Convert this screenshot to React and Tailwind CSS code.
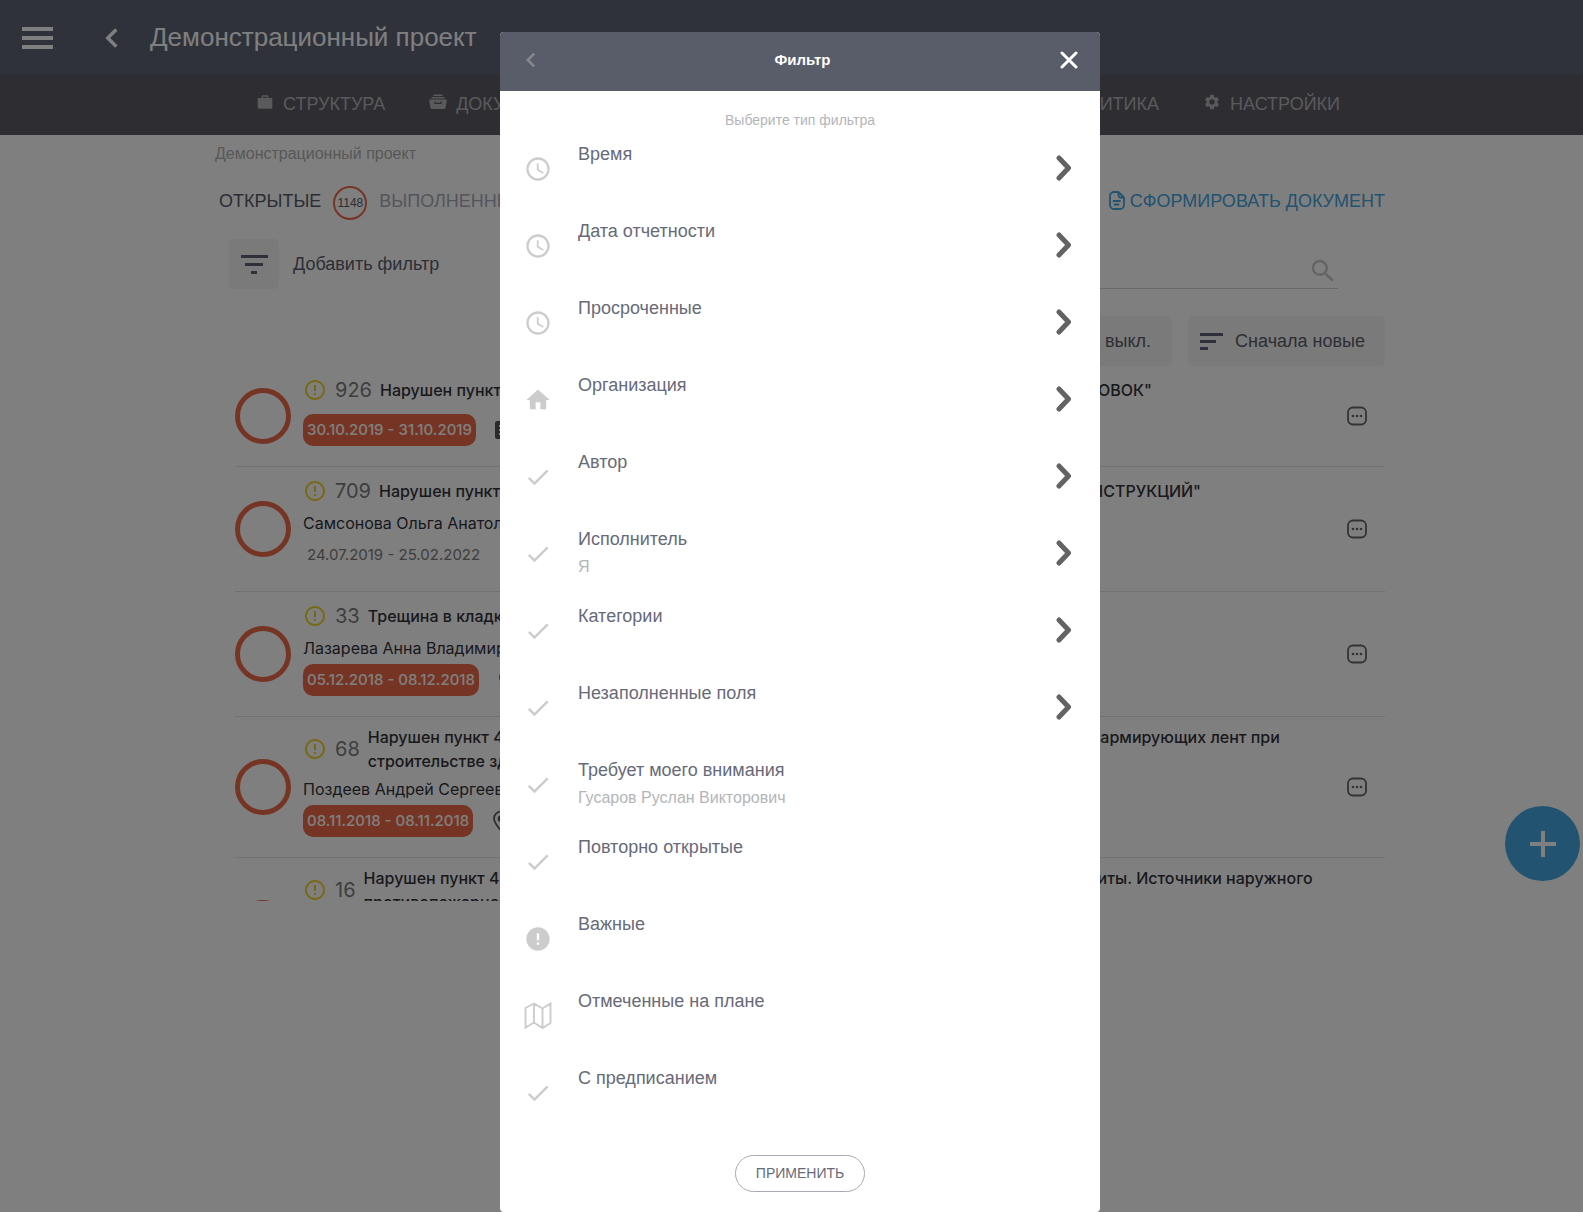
import React from "react";
import { MdAccessTime, MdCheck, MdError, MdErrorOutline, MdHome, MdSearch, MdSettings } from "react-icons/md";
import { IoMdBriefcase, IoMdStats } from "react-icons/io";

function Chevron({ className, direction = "left", round = false, weight = 4 }) {
  return (
    <svg
      viewBox="0 0 16 28"
      className={className}
      fill="none"
      stroke="currentColor"
      strokeWidth={weight}
      strokeLinecap={round ? "round" : "butt"}
      strokeLinejoin={round ? "round" : "miter"}
      aria-hidden="true"
    >
      <path d={direction === "left" ? "M13 4 L3 14 L13 24" : "M3 4 L12.5 14 L3 24"} />
    </svg>
  );
}

function DrawerIcon({ className }) {
  return (
    <svg viewBox="0 0 18 18" className={className} fill="currentColor" aria-hidden="true">
      <path d="M5 1.500 H13 L14 3 H4 Z" />
      <path d="M3 4 H15 L16 5.500 H2 Z" />
      <path fillRule="evenodd" d="M0 6.500 H18 L16.500 15 A1.500 1.500 0 0 1 15 16 H3 A1.500 1.500 0 0 1 1.500 15 Z M5.500 8.500 V11 H12.500 V8.500 H11.200 V9.700 H6.800 V8.500 Z" />
    </svg>
  );
}

function MapIcon({ className }) {
  return (
    <svg viewBox="0 0 28 28" className={className} fill="none" stroke="currentColor" strokeWidth="1.9" aria-hidden="true">
      <path d="M1.5 6 L10 1.5 L18.5 6.5 L26.5 1.5 V21 L18.5 26 L10 20.5 L1.5 25.5 Z M10 1.5 V20.5 M18.5 6.5 V26" />
    </svg>
  );
}

function DocumentIcon({ className }) {
  return (
    <svg viewBox="0 0 16 20" className={className} fill="none" stroke="currentColor" strokeWidth="1.8" strokeLinecap="round" strokeLinejoin="round" aria-hidden="true">
      <path d="M9.5 1 H5 A4 4 0 0 0 1 5 V14 A4 4 0 0 0 5 18 H11 A4 4 0 0 0 15 14 V6.5 Z M9.5 1 V4.5 A2 2 0 0 0 11.500 6.5 H15 M4.500 10 H11 M5.500 13.500 H9.500" />
    </svg>
  );
}

function MoreIcon() {
  return (
    <svg viewBox="0 0 24 24" className="size-6" fill="none" stroke="currentColor" strokeWidth="1.8" aria-hidden="true">
      <rect x="3" y="3.500" width="18" height="17" rx="5" />
      <g fill="currentColor" stroke="none">
        <circle cx="8" cy="12" r="1.300" />
        <circle cx="12" cy="12" r="1.300" />
        <circle cx="16" cy="12" r="1.300" />
      </g>
    </svg>
  );
}

function NoteIcon() {
  return (
    <svg viewBox="0 0 24 24" className="size-6" aria-hidden="true">
      <rect x="3" y="3" width="18" height="18" rx="2" fill="currentColor" />
      <path d="M7 8 H17 M7 12 H17 M7 16 H14" stroke="white" strokeWidth="2" />
    </svg>
  );
}

function PinIcon() {
  return (
    <svg viewBox="0 0 24 24" className="size-6" fill="none" stroke="currentColor" strokeWidth="1.7" aria-hidden="true">
      <path d="M12 21.500 C8 17 5 13.500 5 9.500 A7 7 0 0 1 19 9.500 C19 13.500 16 17 12 21.500 Z" />
      <circle cx="12" cy="9.500" r="2.500" fill="currentColor" />
    </svg>
  );
}

const leftNav = [
  { label: "СТРУКТУРА", Icon: IoMdBriefcase },
  { label: "ДОКУМЕНТЫ", Icon: DrawerIcon },
];
const rightNav = [
  { label: "АНАЛИТИКА", Icon: IoMdStats },
  { label: "НАСТРОЙКИ", Icon: MdSettings },
];

const issues = [
  { id: 926, head: "Нарушен пункт", tail: 'УСТАНОВОК"', width: "w-[772px]", date: "30.10.2019 - 31.10.2019", late: true, Mark: NoteIcon },
  { id: 709, head: "Нарушен пункт", tail: 'КОНСТРУКЦИЙ"', width: "w-[822px]", person: "Самсонова Ольга Анатольевна", date: "24.07.2019 - 25.02.2022" },
  { id: 33, head: "Трещина в кладке", tail: "", width: "w-[772px]", person: "Лазарева Анна Владимировна", date: "05.12.2018 - 08.12.2018", late: true, Mark: PinIcon },
  { id: 68, head: "Нарушен пункт 4.", tail: "и армирующих лент при", second: "строительстве зданий", width: "w-[912px]", person: "Поздеев Андрей Сергеевич", date: "08.11.2018 - 08.11.2018", late: true, Mark: PinIcon },
  { id: 16, head: "Нарушен пункт 4.", tail: "защиты. Источники наружного", second: "противопожарного", width: "w-[949px]", person: "Поздеев Андрей Сергеевич", date: "08.11.2018 - 08.11.2018", late: true, Mark: PinIcon },
];

const filters = [
  { label: "Время", Icon: MdAccessTime, more: true },
  { label: "Дата отчетности", Icon: MdAccessTime, more: true },
  { label: "Просроченные", Icon: MdAccessTime, more: true },
  { label: "Организация", Icon: MdHome, more: true },
  { label: "Автор", Icon: MdCheck, more: true },
  { label: "Исполнитель", value: "Я", Icon: MdCheck, more: true },
  { label: "Категории", Icon: MdCheck, more: true },
  { label: "Незаполненные поля", Icon: MdCheck, more: true },
  { label: "Требует моего внимания", value: "Гусаров Руслан Викторович", Icon: MdCheck },
  { label: "Повторно открытые", Icon: MdCheck },
  { label: "Важные", Icon: MdError },
  { label: "Отмеченные на плане", Icon: MapIcon },
  { label: "С предписанием", Icon: MdCheck },
];

function NavGroup({ items }) {
  return (
    <div className="flex gap-11">
      {items.map(({ label, Icon }) => (
        <a key={label} href="#" className="flex items-center gap-[9px] text-lg text-[#b4b4b8]">
          <Icon className="mb-1 size-[18px]" />
          {label}
        </a>
      ))}
    </div>
  );
}

function IssueRow({ issue }) {
  const { id, head, tail, second, width, person, date, late, Mark } = issue;
  return (
    <li className="flex items-center border-b border-[#e4e4e4]">
      <span className="size-14 shrink-0 rounded-full border-[5px] border-[#ec6b48]" />
      <div className="ml-3 min-w-0 grow pt-2 pb-5 font-['Inter','Noto_Sans',sans-serif] text-base">
        <div className="flex min-h-8 items-center">
          <MdErrorOutline className="size-6 shrink-0 text-[#efd32c]" />
          <span className="ml-2 text-xl text-[#7c7c7c]">{id}</span>
          <div className={`ml-2 shrink-0 leading-6 font-medium whitespace-nowrap text-[#33333a] ${width}`}>
            <div className="flex justify-between">
              <span>{head}</span>
              <span>{tail}</span>
            </div>
            {second && <div>{second}</div>}
          </div>
        </div>
        {person && <p className="leading-8 text-[#33333a]">{person}</p>}
        <div className={person ? "flex items-center gap-4" : "mt-2 flex items-center gap-4"}>
          <span
            className={
              late
                ? "rounded-[10px] bg-[#ec6b48] px-1 text-[15px] leading-8 font-medium text-white"
                : "px-1 text-[15px] leading-8 text-[#7c7c7c]"
            }
          >
            {date}
          </span>
          {Mark && (
            <span className="text-[#55555a]">
              <Mark />
            </span>
          )}
        </div>
      </div>
      <button type="button" aria-label="Действия" className="mr-4 text-[#66666a]">
        <MoreIcon />
      </button>
    </li>
  );
}

function Page() {
  return (
    <div>
      <header className="flex h-[75px] items-center bg-[#5e6474] text-white">
        <button type="button" aria-label="Меню" className="ml-[22px] flex w-[31px] flex-col gap-[5px]">
          <span className="h-[4px] w-full bg-white" />
          <span className="h-[4px] w-full bg-white" />
          <span className="h-[4px] w-full bg-white" />
        </button>
        <button type="button" aria-label="Назад" className="ml-[51px]">
          <Chevron className="h-6 w-4" weight={4} />
        </button>
        <h1 className="ml-[30px] text-[26px]">Демонстрационный проект</h1>
      </header>
      <nav className="h-[60px] bg-[#5b5b64] pr-1 pb-0.5 pl-[17px]">
        <div className="mx-auto flex h-full max-w-[1084px] items-center justify-between">
          <NavGroup items={leftNav} />
          <NavGroup items={rightNav} />
        </div>
      </nav>

      <main className="pl-[17px]">
        <div className="mx-auto max-w-[1170px]">
          <p className="pt-[7px] text-base text-[#b0b0b0]">Демонстрационный проект</p>
          <div className="mt-2.5 flex h-[50px] items-center justify-between pl-1 text-lg">
            <div className="flex items-center gap-3">
              <button type="button" className="text-[#585b69]">ОТКРЫТЫЕ</button>
              <span className="mt-1 flex size-[34px] items-center justify-center rounded-full border-2 border-[#ec6b48] text-xs text-[#585b69]">1148</span>
              <button type="button" className="text-[#a8abbb]">ВЫПОЛНЕННЫЕ</button>
            </div>
            <a href="#" className="flex items-center gap-[5px] text-[#44a6e0]">
              <DocumentIcon className="h-5 w-4" />
              СФОРМИРОВАТЬ ДОКУМЕНТ
            </a>
          </div>
          <div className="mt-[13px] flex items-start justify-between pr-[47px] pl-3.5">
            <button type="button" className="flex items-center gap-3.5 text-lg text-[#5a5d6b]">
              <span className="flex size-[50px] flex-col items-center justify-center gap-[5px] rounded-[5px] bg-[#f4f4f4]">
                <span className="h-[3px] w-[27px] bg-[#5e6275]" />
                <span className="h-[3px] w-[18px] bg-[#5e6275]" />
                <span className="h-[3px] w-[6px] bg-[#5e6275]" />
              </span>
              Добавить фильтр
            </button>
            <label className="mt-3.5 flex h-9 w-[360px] items-center border-b border-[#d0d0d0] text-[#c8c8c8]">
              <input type="search" aria-label="Поиск" className="min-w-0 grow outline-none" />
              <MdSearch className="size-[30px]" />
            </label>
          </div>
          <div className="mt-[27px] flex justify-end gap-4 text-lg text-[#5a5d6b]">
            <button type="button" className="h-[50px] rounded-[5px] bg-[#f4f4f4] px-[21px]">Группировка выкл.</button>
            <button type="button" className="flex h-[50px] items-center gap-3 rounded-[5px] bg-[#f4f4f4] pr-5 pl-3">
              <span className="flex w-[23px] flex-col gap-[4px]">
                <span className="h-[3px] w-[23px] bg-[#5e6275]" />
                <span className="h-[3px] w-[16px] bg-[#5e6275]" />
                <span className="h-[3px] w-[8px] bg-[#5e6275]" />
              </span>
              Сначала новые
            </button>
          </div>
          <ul className="ml-5 h-[535px] overflow-hidden">
            {issues.map((issue) => (
              <IssueRow key={issue.id} issue={issue} />
            ))}
          </ul>
        </div>
      </main>

      <button type="button" aria-label="Добавить" className="fixed top-[806px] right-[3px] flex size-[75px] items-center justify-center rounded-full bg-[#44a9e3] text-white">
        <svg viewBox="0 0 26 26" className="size-[26px]" stroke="currentColor" strokeWidth="4" aria-hidden="true">
          <path d="M13 0 V26 M0 13 H26" />
        </svg>
      </button>
    </div>
  );
}

function FilterDialog() {
  return (
    <div className="fixed inset-0 flex items-start justify-center overflow-hidden bg-black/50 pt-8 pl-[17px]">
      <section role="dialog" aria-modal="true" aria-labelledby="filter-title" className="w-full max-w-[600px] overflow-hidden rounded-[4px] bg-white pb-5">
        <header className="flex h-[59px] items-center justify-between bg-[#595c69] pr-[22px] pb-[3px] pl-[25px] text-white">
          <button type="button" aria-label="Назад" className="w-5 text-[#85878f]">
            <Chevron className="h-[18px] w-3" weight={4} />
          </button>
          <h2 id="filter-title" className="text-[15px] font-bold">Фильтр</h2>
          <button type="button" aria-label="Закрыть">
            <svg viewBox="0 0 18 18" className="size-[18px]" stroke="currentColor" strokeWidth="3" strokeLinecap="round" aria-hidden="true">
              <path d="M2 2 L16 16 M16 2 L2 16" />
            </svg>
          </button>
        </header>
        <p className="pt-[19px] text-center text-sm text-[#b4b5ba]">Выберите тип фильтра</p>
        <ul>
          {filters.map(({ label, value, Icon, more }) => (
            <li key={label}>
              <button type="button" className="flex h-[77px] w-full items-center pr-7 pl-6 text-left">
                <Icon className="size-7 shrink-0 text-[#cccccc]" />
                <span className="ml-[26px] grow self-start pt-2.5 leading-7">
                  <span className="block text-lg leading-7 text-[#676a79]">{label}</span>
                  {value && <span className="block text-base leading-7 text-[#b4b5ba]">{value}</span>}
                </span>
                {more && <Chevron direction="right" round weight={5} className="mb-0.5 h-7 w-4 text-[#636363]" />}
              </button>
            </li>
          ))}
        </ul>
        <div className="mt-6 flex justify-center">
          <button type="button" className="h-[37px] rounded-full border border-[#a9abb4] px-5 pb-0.5 text-sm text-[#676a79]">ПРИМЕНИТЬ</button>
        </div>
      </section>
    </div>
  );
}

export default function App() {
  return (
    <div className="min-h-screen overflow-hidden bg-white font-['Liberation_Sans',Arial,sans-serif]">
      <Page />
      <FilterDialog />
    </div>
  );
}
